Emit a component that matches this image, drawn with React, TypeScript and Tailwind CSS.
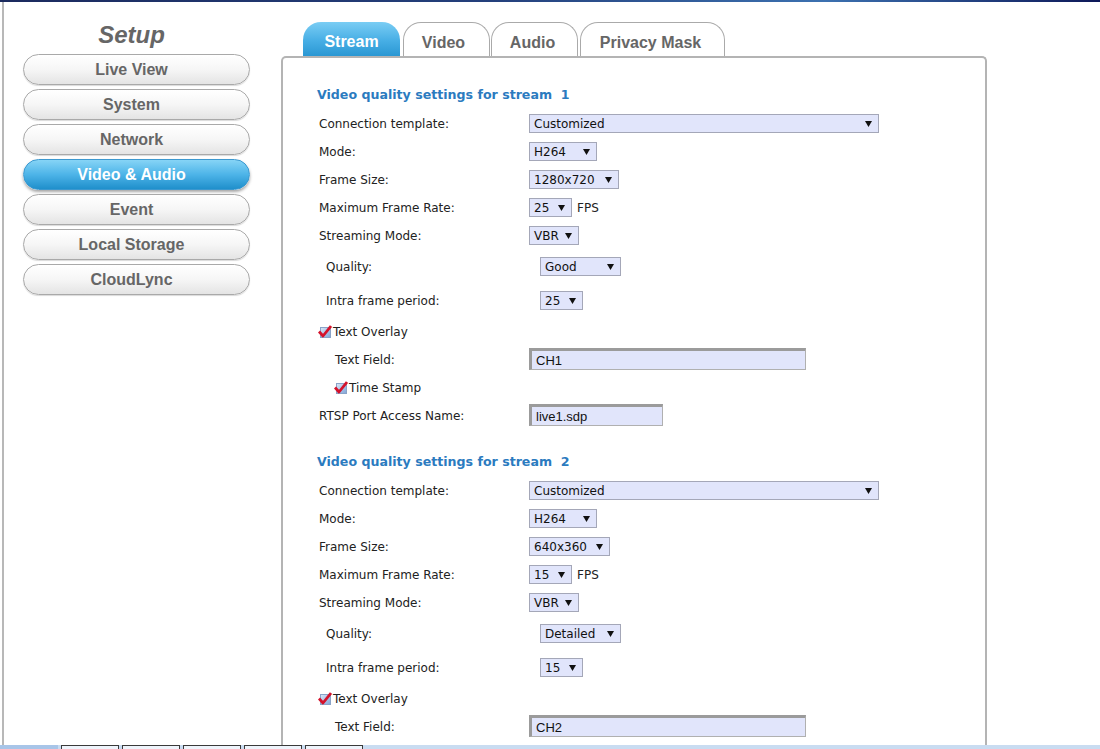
import React from "react";

const Arrow = () => (
  <svg width="7" height="7" viewBox="0 0 7 7" className="shrink-0">
    <polygon points="0,1 7,1 3.5,7" fill="#111" />
  </svg>
);

const Sel = ({ w, value }: { w: string; value: string }) => (
  <div
    className={`flex h-[19px] items-center justify-between border border-[#a4a7b8] bg-[#e1e5fb] pl-[4px] pr-[6px] text-[12px] text-[#111] ${w}`}
  >
    <span className="pt-[2px] leading-none">{value}</span>
    <Arrow />
  </div>
);

const TextIn = ({ w, value }: { w: string; value: string }) => (
  <div
    className={`flex h-[22px] items-center border-t-[3px] border-l-[3px] border-r border-b border-t-[#9b9b9b] border-l-[#9b9b9b] border-r-[#b0b0b0] border-b-[#b0b0b0] bg-[#e1e5fb] pl-[4px] pt-[1px] font-['Liberation_Sans',Arial,sans-serif] text-[13px] text-[#111] ${w}`}
  >
    {value}
  </div>
);

const Check = () => (
  <svg width="14" height="13" viewBox="0 0 14 13" className="shrink-0">
    <defs>
      <linearGradient id="cbg" x1="0" y1="0" x2="1" y2="1">
        <stop offset="0" stopColor="#dbe7f7" />
        <stop offset="1" stopColor="#7ea4d8" />
      </linearGradient>
    </defs>
    <rect x="2.5" y="2.5" width="10" height="10" fill="url(#cbg)" stroke="#8aa3c8" />
    <path d="M1 6.5 L5 11 L13 1" fill="none" stroke="#d4122b" strokeWidth="2.8" strokeLinejoin="round" />
  </svg>
);

type Stream = {
  n: number;
  frame: string;
  frameW: string;
  fps: string;
  quality: string;
  intra: string;
  text: string;
  rtsp?: string;
};

const Row = ({ children, h = "h-[28px]" }: { children: React.ReactNode; h?: string }) => (
  <div className={`flex items-center ${h}`}>{children}</div>
);

const Label = ({ children, cls = "w-[210px] ml-[2px]" }: { children: React.ReactNode; cls?: string }) => (
  <div className={`shrink-0 pt-[2px] ${cls}`}>{children}</div>
);

const Section = ({ s, first }: { s: Stream; first?: boolean }) => (
  <div>
    <div
      className={`flex h-[29px] items-center whitespace-pre pt-[2px] text-[12.6px] font-bold text-[#2b7bbf] ${first ? "" : "mt-[18px]"}`}
    >
      {`Video quality settings for stream  ${s.n}`}
    </div>
    <Row>
      <Label>Connection template:</Label>
      <Sel w="w-[350px]" value="Customized" />
    </Row>
    <Row>
      <Label>Mode:</Label>
      <Sel w="w-[68px]" value="H264" />
    </Row>
    <Row>
      <Label>Frame Size:</Label>
      <Sel w={s.frameW} value={s.frame} />
    </Row>
    <Row>
      <Label>Maximum Frame Rate:</Label>
      <Sel w="w-[43px]" value={s.fps} />
      <span className="ml-[5px] pt-[2px]">FPS</span>
    </Row>
    <Row>
      <Label>Streaming Mode:</Label>
      <Sel w="w-[50px]" value="VBR" />
    </Row>
    <Row h="h-[34px]">
      <Label cls="w-[214px] ml-[9px]">Quality:</Label>
      <Sel w="w-[81px]" value={s.quality} />
    </Row>
    <Row h="h-[34px]">
      <Label cls="w-[214px] ml-[9px]">Intra frame period:</Label>
      <Sel w="w-[43px]" value={s.intra} />
    </Row>
    <Row>
      <div className="ml-[1px] flex items-center">
        <Check />
        <span className="ml-[1px] pt-[1px]">Text Overlay</span>
      </div>
    </Row>
    <Row>
      <Label cls="w-[194px] ml-[18px]">Text Field:</Label>
      <TextIn w="w-[277px]" value={s.text} />
    </Row>
    {s.rtsp && (
      <>
        <Row>
          <div className="ml-[17px] flex items-center">
            <Check />
            <span className="ml-[1px] pt-[1px]">Time Stamp</span>
          </div>
        </Row>
        <Row>
          <Label>RTSP Port Access Name:</Label>
          <TextIn w="w-[134px]" value={s.rtsp} />
        </Row>
      </>
    )}
  </div>
);

const navItems = ["Live View", "System", "Network", "Video & Audio", "Event", "Local Storage", "CloudLync"];

export default function App() {
  const s1: Stream = { n: 1, frame: "1280x720", frameW: "w-[90px]", fps: "25", quality: "Good", intra: "25", text: "CH1", rtsp: "live1.sdp" };
  const s2: Stream = { n: 2, frame: "640x360", frameW: "w-[81px]", fps: "15", quality: "Detailed", intra: "15", text: "CH2" };
  return (
    <div className="flex h-[749px] w-[1100px] flex-col overflow-hidden bg-white">
      <div className="h-[2px] shrink-0 bg-[linear-gradient(90deg,#1b2a5e_0%,#24407c_45%,#3c71b0_75%,#0d1858_100%)]" />
      <div className="flex min-h-0 flex-1">
        {/* Sidebar */}
        <aside className="ml-[2px] flex w-[279px] shrink-0 flex-col gap-[4px] border-l-2 border-[#b8b8b8] pl-[19px] pt-[18px]">
          <div className="flex h-[30px] w-[227px] items-center justify-center pr-[10px] font-['Liberation_Sans',Arial,sans-serif] text-[24px] font-bold italic text-[#666]">
            Setup
          </div>
          {navItems.map((t) =>
            t === "Video & Audio" ? (
              <div
                key={t}
                className="flex h-[31px] w-[227px] items-center justify-center rounded-full border border-[#3b98cf] bg-[linear-gradient(180deg,#86d4f6_0%,#4db4e8_50%,#1f8fcb_100%)] pr-[10px] font-['Liberation_Sans',Arial,sans-serif] text-[16px] font-bold text-white shadow-[0_2px_3px_rgba(0,0,0,0.35)]"
              >
                {t}
              </div>
            ) : (
              <div
                key={t}
                className="flex h-[31px] w-[227px] items-center justify-center rounded-full border border-[#a9a9a9] bg-[linear-gradient(180deg,#ffffff_0%,#f6f6f6_50%,#e4e4e4_100%)] pr-[10px] font-['Liberation_Sans',Arial,sans-serif] text-[16px] font-bold text-[#666] shadow-[0_1px_1px_rgba(0,0,0,0.15)]"
              >
                {t}
              </div>
            )
          )}
        </aside>

        {/* Main */}
        <main className="flex w-[706px] shrink-0 flex-col">
          <div className="flex h-[54px] shrink-0 items-end pl-[22px] font-['Liberation_Sans',Arial,sans-serif] text-[16px] font-bold">
            <div className="flex h-[34px] w-[97px] items-center justify-center rounded-t-[18px] bg-[linear-gradient(180deg,#7acdf4_0%,#47aee5_55%,#2a97d3_100%)] pt-[6px] text-white">
              Stream
            </div>
            <div className="ml-[3px] flex h-[34px] w-[87px] items-center justify-center rounded-t-[18px] border border-b-0 border-[#aaaaaa] bg-white pr-[6px] pt-[6px] text-[#666]">
              Video
            </div>
            <div className="ml-[1px] flex h-[34px] w-[87px] items-center justify-center rounded-t-[18px] border border-b-0 border-[#aaaaaa] bg-white pr-[4px] pt-[6px] text-[#666]">
              Audio
            </div>
            <div className="ml-[2px] flex h-[34px] w-[145px] items-center justify-center rounded-t-[18px] border border-b-0 border-[#aaaaaa] bg-white pr-[4px] pt-[6px] text-[#666]">
              Privacy Mask
            </div>
          </div>
          <div className="min-h-0 flex-1 rounded-t-[5px] border-x-2 border-t-2 border-[#b4b4b4] pl-[34px] pt-[22px] font-['DejaVu_Sans',Verdana,sans-serif] text-[12px] text-[#222]">
            <Section s={s1} first />
            <Section s={s2} />
          </div>
        </main>
      </div>
      {/* Taskbar strip */}
      <div className="flex h-[4px] shrink-0 bg-[#c9dcf1]">
        <div className="w-[58px] bg-[#a8c5e8]" />
        {[0, 1, 2, 3, 4].map((i) => (
          <div key={i} className="ml-[3px] w-[58px] border-x border-t border-[#3a3a3a] bg-[#eef4fb]" />
        ))}
      </div>
    </div>
  );
}
